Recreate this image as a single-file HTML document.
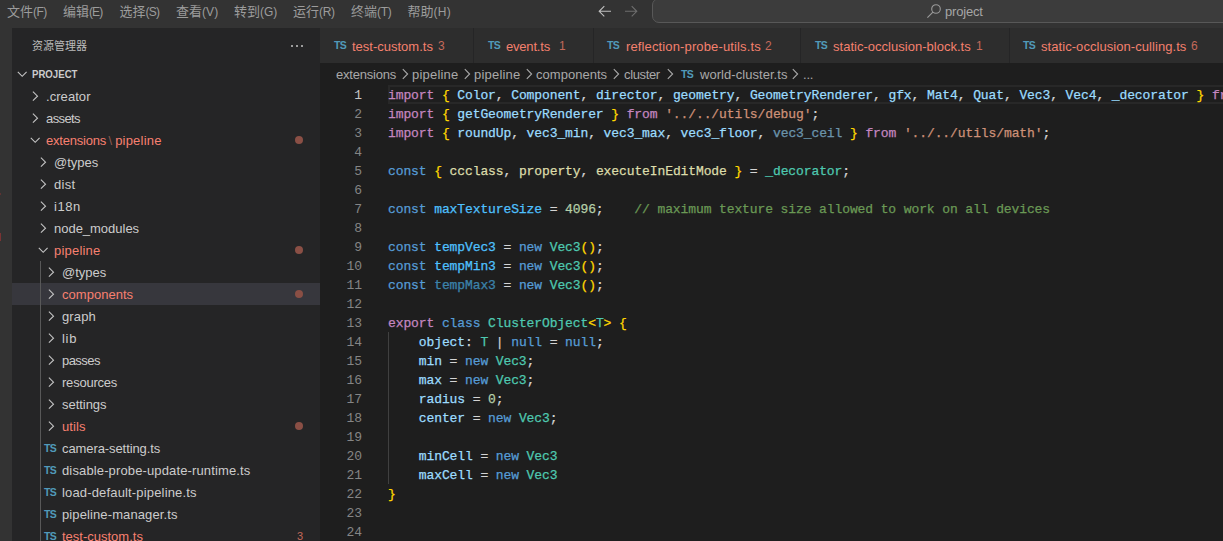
<!DOCTYPE html>
<html lang="zh-CN">
<head>
<meta charset="utf-8">
<title>world-cluster.ts - project</title>
<style>
html,body{margin:0;padding:0;}
body{width:1223px;height:541px;overflow:hidden;position:relative;background:#1e1e1e;
  font-family:"Liberation Sans","Noto Sans CJK SC",sans-serif;font-size:13px;color:#cccccc;}
.abs{position:absolute;}
#titlebar{left:0;top:0;width:1223px;height:28px;background:#333333;}
#activity{left:0;top:28px;width:12px;height:513px;background:#333333;}
#sidebar{left:12px;top:28px;width:308px;height:513px;background:#252526;}
#menu span{position:absolute;top:0;height:23px;line-height:23px;white-space:nowrap;color:#9c9c9c;font-size:13px;}
#menu i{font-style:normal;font-size:12px;}
#cmd{left:652px;top:-2px;width:600px;height:23px;border:1px solid #585858;border-radius:7px;background:#3c3c3c;}
#cmdtext{left:945px;top:0;height:23px;line-height:23px;color:#a6a6a6;font-size:13px;letter-spacing:-0.2px;}
/* sidebar */
.row{position:absolute;left:12px;width:308px;height:22px;line-height:22px;white-space:nowrap;}
.row .lbl{position:absolute;top:1px;font-size:13px;color:#cccccc;}
.row.err .lbl{color:#f88070;}
.row .chev{position:absolute;top:3px;width:16px;height:16px;}
.row .ts{position:absolute;top:0;font-size:10.5px;font-weight:bold;color:#519aba;letter-spacing:-0.6px;}
.row .dot{position:absolute;left:283px;top:7px;width:8px;height:8px;border-radius:50%;background:#8a4f45;}
.row .cnt{position:absolute;left:285px;top:0;font-size:11px;color:#c4695a;}
svg.ch{display:block;}
/* tabs */
#tabs{left:320px;top:28px;width:903px;height:35px;background:#252526;}
.tab{position:absolute;top:0;height:35px;background:#2d2d2d;}
.tab .ts{position:absolute;top:0;line-height:34px;font-size:10.5px;font-weight:bold;color:#519aba;letter-spacing:-0.6px;}
.tab .lbl{position:absolute;top:0;line-height:37px;font-size:13px;color:#f4806e;white-space:nowrap;}
.tab .n{position:absolute;top:0;line-height:37px;font-size:12px;color:#c4695a;}
/* breadcrumbs */
#crumbs{left:320px;top:63px;width:903px;height:22px;background:#1e1e1e;}
#crumbs span{position:absolute;top:0;line-height:24px;font-size:13px;color:#a9a9a9;white-space:nowrap;}
#crumbs .ts{font-size:10.5px;font-weight:bold;color:#519aba;letter-spacing:-0.6px;line-height:22px;}
/* code */
#code{left:320px;top:85px;width:903px;height:456px;overflow:hidden;}
.ln{position:absolute;left:0;width:42px;text-align:right;height:19px;line-height:21px;color:#858585;
  font-family:"Liberation Mono",monospace;font-size:13px;letter-spacing:-0.104px;}
.ln.cur{color:#c6c6c6;}
.cl{position:absolute;left:68px;height:19px;line-height:21px;white-space:pre;color:#d4d4d4;
  font-family:"Liberation Mono",monospace;font-size:13px;letter-spacing:-0.104px;-webkit-text-stroke:0.25px;}
.k{color:#c586c0}.b{color:#569cd6}.v{color:#9cdcfe}.c{color:#4fc1ff}.t{color:#4ec9b0}.s{color:#ce9178}
.n{color:#b5cea8}.m{color:#6a9955}.y{color:#ffd700}.f{color:#dcdcaa}.dim{opacity:.62}
#curline{left:68px;top:0;width:840px;height:19px;box-sizing:border-box;border:2px solid #282828;}
#guide{left:68px;top:247px;width:1px;height:152px;background:#404040;}
</style>
</head>
<body>
<div id="titlebar" class="abs">
  <div id="menu">
    <span style="left:7px">文件<i style="letter-spacing:-0.5px">(F)</i></span>
    <span style="left:63px">编辑<i style="letter-spacing:-0.9px">(E)</i></span>
    <span style="left:119.5px">选择<i style="letter-spacing:-0.7px">(S)</i></span>
    <span style="left:176px">查看<i style="letter-spacing:0.1px">(V)</i></span>
    <span style="left:234px">转到<i style="letter-spacing:-0.1px">(G)</i></span>
    <span style="left:293px">运行<i style="letter-spacing:-0.3px">(R)</i></span>
    <span style="left:351px">终端<i style="letter-spacing:-0.3px">(T)</i></span>
    <span style="left:407.5px">帮助<i style="letter-spacing:0.3px">(H)</i></span>
  </div>
  <svg class="abs" style="left:596px;top:3px" width="18" height="16" viewBox="0 0 18 16"><path d="M15 8.3H3.2M8.3 3.2L3.2 8.3l5.1 5.1" fill="none" stroke="#c0c0c0" stroke-width="1.1"/></svg>
  <svg class="abs" style="left:622px;top:3px" width="18" height="16" viewBox="0 0 18 16"><path d="M3 8.3h11.8M9.7 3.2l5.1 5.1-5.1 5.1" fill="none" stroke="#6e6e6e" stroke-width="1.1"/></svg>
  <div id="cmd" class="abs"></div>
  <svg class="abs" style="left:924px;top:2px" width="20" height="18" viewBox="0 0 20 18"><circle cx="12" cy="7" r="4.3" fill="none" stroke="#9a9a9a" stroke-width="1.1"/><path d="M8.9 10.2L3.4 15.7" stroke="#9a9a9a" stroke-width="1.1"/></svg>
  <div id="cmdtext" class="abs">project</div>
</div>
<div id="activity" class="abs"></div>
<div class="abs" style="left:0;top:233px;width:1px;height:8px;background:#7a3434"></div>
<div class="abs" style="left:0;top:193px;width:1px;height:2px;background:#5e3333"></div>
<div id="sidebar" class="abs"></div>
<!--SIDEBAR-START-->
<div class="abs" style="left:32px;top:29px;height:35px;line-height:35px;font-size:11px;color:#bbbbbb">资源管理器</div>
<div class="abs" style="left:290px;top:44px;width:14px;height:4px"><svg class="ch" width="14" height="4" viewBox="0 0 14 4"><circle cx="2" cy="2" r="1" fill="#c5c5c5"/><circle cx="7" cy="2" r="1" fill="#c5c5c5"/><circle cx="12" cy="2" r="1" fill="#c5c5c5"/></svg></div>
<div class="row" style="top:63px"><span class="chev" style="left:3px"><svg class="ch" width="16" height="16" viewBox="0 0 16 16"><path d="M2.8 5.8L7.2 10.3 11.6 5.8" fill="none" stroke="#c5c5c5" stroke-width="1.1"/></svg></span><span class="lbl" style="left:20px;top:0;font-size:11px;font-weight:bold;color:#cccccc;letter-spacing:0;transform:scaleX(0.875);transform-origin:0 50%">PROJECT</span></div>
<div class="row" style="top:85px"><span class="chev" style="left:16px"><svg class="ch" width="16" height="16" viewBox="0 0 16 16"><path d="M4.9 3.7L9.5 8.2 4.9 12.7" fill="none" stroke="#c5c5c5" stroke-width="1.1"/></svg></span><span class="lbl" style="left:34px;letter-spacing:0.057px">.creator</span></div>
<div class="row" style="top:107px"><span class="chev" style="left:16px"><svg class="ch" width="16" height="16" viewBox="0 0 16 16"><path d="M4.9 3.7L9.5 8.2 4.9 12.7" fill="none" stroke="#c5c5c5" stroke-width="1.1"/></svg></span><span class="lbl" style="left:34px;letter-spacing:-0.6px">assets</span></div>
<div class="row err" style="top:129px"><span class="chev" style="left:16px"><svg class="ch" width="16" height="16" viewBox="0 0 16 16"><path d="M2.8 5.8L7.2 10.3 11.6 5.8" fill="none" stroke="#c5c5c5" stroke-width="1.1"/></svg></span><span class="lbl" style="left:34px"><span style="letter-spacing:-0.211px">extensions</span><span style="color:#8c5a52;margin:0 3px 0 2.5px">\</span><span style="letter-spacing:0.2px">pipeline</span></span><span class="dot"></span></div>
<div class="row" style="top:151px"><span class="chev" style="left:24px"><svg class="ch" width="16" height="16" viewBox="0 0 16 16"><path d="M4.9 3.7L9.5 8.2 4.9 12.7" fill="none" stroke="#c5c5c5" stroke-width="1.1"/></svg></span><span class="lbl" style="left:42px">@types</span></div>
<div class="row" style="top:173px"><span class="chev" style="left:24px"><svg class="ch" width="16" height="16" viewBox="0 0 16 16"><path d="M4.9 3.7L9.5 8.2 4.9 12.7" fill="none" stroke="#c5c5c5" stroke-width="1.1"/></svg></span><span class="lbl" style="left:42px;letter-spacing:0.333px">dist</span></div>
<div class="row" style="top:195px"><span class="chev" style="left:24px"><svg class="ch" width="16" height="16" viewBox="0 0 16 16"><path d="M4.9 3.7L9.5 8.2 4.9 12.7" fill="none" stroke="#c5c5c5" stroke-width="1.1"/></svg></span><span class="lbl" style="left:42px;letter-spacing:0.567px">i18n</span></div>
<div class="row" style="top:217px"><span class="chev" style="left:24px"><svg class="ch" width="16" height="16" viewBox="0 0 16 16"><path d="M4.9 3.7L9.5 8.2 4.9 12.7" fill="none" stroke="#c5c5c5" stroke-width="1.1"/></svg></span><span class="lbl" style="left:42px;letter-spacing:-0.018px">node_modules</span></div>
<div class="row err" style="top:239px"><span class="chev" style="left:24px"><svg class="ch" width="16" height="16" viewBox="0 0 16 16"><path d="M2.8 5.8L7.2 10.3 11.6 5.8" fill="none" stroke="#c5c5c5" stroke-width="1.1"/></svg></span><span class="lbl" style="left:42px;letter-spacing:0.2px">pipeline</span><span class="dot"></span></div>
<div class="row" style="top:261px"><span class="chev" style="left:32px"><svg class="ch" width="16" height="16" viewBox="0 0 16 16"><path d="M4.9 3.7L9.5 8.2 4.9 12.7" fill="none" stroke="#c5c5c5" stroke-width="1.1"/></svg></span><span class="lbl" style="left:50px">@types</span></div>
<div class="row err" style="top:283px;background:#37373d"><span class="chev" style="left:32px"><svg class="ch" width="16" height="16" viewBox="0 0 16 16"><path d="M4.9 3.7L9.5 8.2 4.9 12.7" fill="none" stroke="#c5c5c5" stroke-width="1.1"/></svg></span><span class="lbl" style="left:50px;letter-spacing:0.022px">components</span><span class="dot"></span></div>
<div class="row" style="top:305px"><span class="chev" style="left:32px"><svg class="ch" width="16" height="16" viewBox="0 0 16 16"><path d="M4.9 3.7L9.5 8.2 4.9 12.7" fill="none" stroke="#c5c5c5" stroke-width="1.1"/></svg></span><span class="lbl" style="left:50px;letter-spacing:0.125px">graph</span></div>
<div class="row" style="top:327px"><span class="chev" style="left:32px"><svg class="ch" width="16" height="16" viewBox="0 0 16 16"><path d="M4.9 3.7L9.5 8.2 4.9 12.7" fill="none" stroke="#c5c5c5" stroke-width="1.1"/></svg></span><span class="lbl" style="left:50px;letter-spacing:0.7px">lib</span></div>
<div class="row" style="top:349px"><span class="chev" style="left:32px"><svg class="ch" width="16" height="16" viewBox="0 0 16 16"><path d="M4.9 3.7L9.5 8.2 4.9 12.7" fill="none" stroke="#c5c5c5" stroke-width="1.1"/></svg></span><span class="lbl" style="left:50px;letter-spacing:-0.56px">passes</span></div>
<div class="row" style="top:371px"><span class="chev" style="left:32px"><svg class="ch" width="16" height="16" viewBox="0 0 16 16"><path d="M4.9 3.7L9.5 8.2 4.9 12.7" fill="none" stroke="#c5c5c5" stroke-width="1.1"/></svg></span><span class="lbl" style="left:50px;letter-spacing:-0.213px">resources</span></div>
<div class="row" style="top:393px"><span class="chev" style="left:32px"><svg class="ch" width="16" height="16" viewBox="0 0 16 16"><path d="M4.9 3.7L9.5 8.2 4.9 12.7" fill="none" stroke="#c5c5c5" stroke-width="1.1"/></svg></span><span class="lbl" style="left:50px;letter-spacing:-0.043px">settings</span></div>
<div class="row err" style="top:415px"><span class="chev" style="left:32px"><svg class="ch" width="16" height="16" viewBox="0 0 16 16"><path d="M4.9 3.7L9.5 8.2 4.9 12.7" fill="none" stroke="#c5c5c5" stroke-width="1.1"/></svg></span><span class="lbl" style="left:50px;letter-spacing:0.1px">utils</span><span class="dot"></span></div>
<div class="row" style="top:437px"><span class="ts" style="left:32px">TS</span><span class="lbl" style="left:50px;letter-spacing:-0.088px">camera-setting.ts</span></div>
<div class="row" style="top:459px"><span class="ts" style="left:32px">TS</span><span class="lbl" style="left:50px;letter-spacing:0.133px">disable-probe-update-runtime.ts</span></div>
<div class="row" style="top:481px"><span class="ts" style="left:32px">TS</span><span class="lbl" style="left:50px;letter-spacing:0.161px">load-default-pipeline.ts</span></div>
<div class="row" style="top:503px"><span class="ts" style="left:32px">TS</span><span class="lbl" style="left:50px;letter-spacing:0.111px">pipeline-manager.ts</span></div>
<div class="row err" style="top:525px"><span class="ts" style="left:32px">TS</span><span class="lbl" style="left:50px">test-custom.ts</span><span class="cnt">3</span></div>
<div class="abs" style="left:40px;top:261px;width:1px;height:280px;background:#585858"></div>
<!--SIDEBAR-END-->
<!--TABS-START-->
<div id="tabs" class="abs">
<div class="tab" style="left:0px;width:153px"><span class="ts" style="left:14px">TS</span><span class="lbl" style="left:32px">test-custom.ts</span><span class="n" style="left:118px">3</span></div>
<div class="tab" style="left:154px;width:119px"><span class="ts" style="left:14px">TS</span><span class="lbl" style="left:32px;letter-spacing:-0.2px">event.ts</span><span class="n" style="left:85px">1</span></div>
<div class="tab" style="left:274px;width:206px"><span class="ts" style="left:13px">TS</span><span class="lbl" style="left:32px;letter-spacing:0.133px">reflection-probe-utils.ts</span><span class="n" style="left:171px">2</span></div>
<div class="tab" style="left:481px;width:208px"><span class="ts" style="left:14px">TS</span><span class="lbl" style="left:32px;letter-spacing:0.017px">static-occlusion-block.ts</span><span class="n" style="left:175px">1</span></div>
<div class="tab" style="left:690px;width:213px"><span class="ts" style="left:13px">TS</span><span class="lbl" style="left:31px;letter-spacing:0.06px">static-occlusion-culling.ts</span><span class="n" style="left:181px">6</span></div>
</div>
<div id="crumbs" class="abs">
<span style="left:16px;letter-spacing:-0.211px">extensions</span>
<svg class="abs" style="left:77px;top:3px" width="16" height="16" viewBox="0 0 16 16"><path d="M5.8 3.2L10.6 8 5.8 12.8" fill="none" stroke="#a9a9a9" stroke-width="1.1"/></svg>
<span style="left:92px;letter-spacing:0.2px">pipeline</span>
<svg class="abs" style="left:139px;top:3px" width="16" height="16" viewBox="0 0 16 16"><path d="M5.8 3.2L10.6 8 5.8 12.8" fill="none" stroke="#a9a9a9" stroke-width="1.1"/></svg>
<span style="left:154px;letter-spacing:0.2px">pipeline</span>
<svg class="abs" style="left:201px;top:3px" width="16" height="16" viewBox="0 0 16 16"><path d="M5.8 3.2L10.6 8 5.8 12.8" fill="none" stroke="#a9a9a9" stroke-width="1.1"/></svg>
<span style="left:216px;letter-spacing:0.022px">components</span>
<svg class="abs" style="left:288px;top:3px" width="16" height="16" viewBox="0 0 16 16"><path d="M5.8 3.2L10.6 8 5.8 12.8" fill="none" stroke="#a9a9a9" stroke-width="1.1"/></svg>
<span style="left:304px;letter-spacing:-0.367px">cluster</span>
<svg class="abs" style="left:342px;top:3px" width="16" height="16" viewBox="0 0 16 16"><path d="M5.8 3.2L10.6 8 5.8 12.8" fill="none" stroke="#a9a9a9" stroke-width="1.1"/></svg>
<span class="ts" style="left:361px">TS</span>
<span style="left:380px;letter-spacing:0.05px">world-cluster.ts</span>
<svg class="abs" style="left:467px;top:3px" width="16" height="16" viewBox="0 0 16 16"><path d="M5.8 3.2L10.6 8 5.8 12.8" fill="none" stroke="#a9a9a9" stroke-width="1.1"/></svg>
<span style="left:483px;letter-spacing:-0.2px">...</span>
</div>
<!--TABS-END-->
<!--CODE-START-->
<div id="code" class="abs">
<div id="curline" class="abs"></div>
<div id="guide" class="abs"></div>
<div class="ln cur" style="top:0px">1</div>
<div class="cl" style="top:0px"><span class="k">import</span> <span class="y">{</span> <span class="v">Color</span>, <span class="v">Component</span>, <span class="v">director</span>, <span class="v">geometry</span>, <span class="v">GeometryRenderer</span>, <span class="v">gfx</span>, <span class="v">Mat4</span>, <span class="v">Quat</span>, <span class="v">Vec3</span>, <span class="v">Vec4</span>, <span class="v">_decorator</span> <span class="y">}</span> <span class="k">from</span> <span class="s">'cc'</span>;</div>
<div class="ln" style="top:19px">2</div>
<div class="cl" style="top:19px"><span class="k">import</span> <span class="y">{</span> <span class="v">getGeometryRenderer</span> <span class="y">}</span> <span class="k">from</span> <span class="s">'../../utils/debug'</span>;</div>
<div class="ln" style="top:38px">3</div>
<div class="cl" style="top:38px"><span class="k">import</span> <span class="y">{</span> <span class="v">roundUp</span>, <span class="v">vec3_min</span>, <span class="v">vec3_max</span>, <span class="v">vec3_floor</span>, <span class="v dim">vec3_ceil</span> <span class="y">}</span> <span class="k">from</span> <span class="s">'../../utils/math'</span>;</div>
<div class="ln" style="top:57px">4</div>
<div class="ln" style="top:76px">5</div>
<div class="cl" style="top:76px"><span class="b">const</span> <span class="y">{</span> <span class="f">ccclass</span>, <span class="f">property</span>, <span class="f">executeInEditMode</span> <span class="y">}</span> = <span class="t">_decorator</span>;</div>
<div class="ln" style="top:95px">6</div>
<div class="ln" style="top:114px">7</div>
<div class="cl" style="top:114px"><span class="b">const</span> <span class="c">maxTextureSize</span> = <span class="n">4096</span>;    <span class="m">// maximum texture size allowed to work on all devices</span></div>
<div class="ln" style="top:133px">8</div>
<div class="ln" style="top:152px">9</div>
<div class="cl" style="top:152px"><span class="b">const</span> <span class="c">tempVec3</span> = <span class="b">new</span> <span class="t">Vec3</span><span class="y">()</span>;</div>
<div class="ln" style="top:171px">10</div>
<div class="cl" style="top:171px"><span class="b">const</span> <span class="c">tempMin3</span> = <span class="b">new</span> <span class="t">Vec3</span><span class="y">()</span>;</div>
<div class="ln" style="top:190px">11</div>
<div class="cl" style="top:190px"><span class="b">const</span> <span class="c dim">tempMax3</span> = <span class="b">new</span> <span class="t">Vec3</span><span class="y">()</span>;</div>
<div class="ln" style="top:209px">12</div>
<div class="ln" style="top:228px">13</div>
<div class="cl" style="top:228px"><span class="k">export</span> <span class="b">class</span> <span class="t">ClusterObject</span><span class="y">&lt;</span><span class="t">T</span><span class="y">&gt;</span> <span class="y">{</span></div>
<div class="ln" style="top:247px">14</div>
<div class="cl" style="top:247px">    <span class="v">object</span>: <span class="t">T</span> | <span class="b">null</span> = <span class="b">null</span>;</div>
<div class="ln" style="top:266px">15</div>
<div class="cl" style="top:266px">    <span class="v">min</span> = <span class="b">new</span> <span class="t">Vec3</span>;</div>
<div class="ln" style="top:285px">16</div>
<div class="cl" style="top:285px">    <span class="v">max</span> = <span class="b">new</span> <span class="t">Vec3</span>;</div>
<div class="ln" style="top:304px">17</div>
<div class="cl" style="top:304px">    <span class="v">radius</span> = <span class="n">0</span>;</div>
<div class="ln" style="top:323px">18</div>
<div class="cl" style="top:323px">    <span class="v">center</span> = <span class="b">new</span> <span class="t">Vec3</span>;</div>
<div class="ln" style="top:342px">19</div>
<div class="ln" style="top:361px">20</div>
<div class="cl" style="top:361px">    <span class="v">minCell</span> = <span class="b">new</span> <span class="t">Vec3</span></div>
<div class="ln" style="top:380px">21</div>
<div class="cl" style="top:380px">    <span class="v">maxCell</span> = <span class="b">new</span> <span class="t">Vec3</span></div>
<div class="ln" style="top:399px">22</div>
<div class="cl" style="top:399px"><span class="y">}</span></div>
<div class="ln" style="top:418px">23</div>
<div class="ln" style="top:437px">24</div>
</div>
<!--CODE-END-->
</body>
</html>
